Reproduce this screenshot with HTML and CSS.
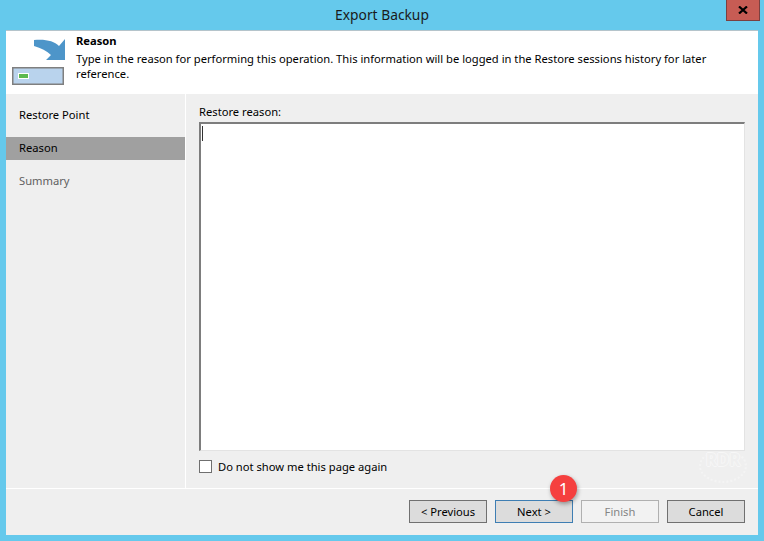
FILE: index.html
```html
<!DOCTYPE html>
<html lang="en">
<head>
<meta charset="utf-8">
<title>Export Backup</title>
<link rel="stylesheet" href="styles.css">
</head>
<body>
<div class="window">
  <div class="titlebar">
    <span class="title">Export Backup</span>
    <button class="close" aria-label="Close"><svg width="10" height="8" viewBox="0 0 10 8"><path d="M1 0.5 L9 7.5 M9 0.5 L1 7.5" stroke="#000" stroke-width="2.2" fill="none"/></svg></button>
  </div>
  <div class="panel">
    <header class="header">
      <svg class="logo" width="54" height="58" viewBox="0 0 54 58">
        <path d="M22 10 C34 9 42 11 47 16 L53 9 L53 30 L34 30 L39 25 C35 21 29 18 22 16 Z" fill="#4d95c9"/>
        <rect x="0.75" y="37.75" width="50.5" height="16.5" fill="#b9d3ed" stroke="#7f7f7f" stroke-width="1.5"/>
        <rect x="6.5" y="43.5" width="10" height="5" fill="#5cb94f" stroke="#fff" stroke-width="1"/>
      </svg>
      <div class="intro">
        <h1 class="heading">Reason</h1>
        <p class="desc">Type in the reason for performing this operation. This information will be logged in the Restore sessions history for later reference.</p>
      </div>
    </header>
    <div class="middle">
      <nav class="side">
        <div class="step">Restore Point</div>
        <div class="step current">Reason</div>
        <div class="step muted">Summary</div>
      </nav>
      <main class="content">
        <label class="field-label" for="reason">Restore reason:</label>
        <div class="textbox" id="reason"><span class="caret"></span></div>
        <div class="check-row"><span class="check"></span><span>Do not show me this page again</span></div>
        <div class="watermark"><span>RDR</span></div>
      </main>
    </div>
    <footer class="footer">
      <button class="btn">&lt; Previous</button>
      <div class="next-wrap">
        <button class="btn primary">Next &gt;</button>
        <span class="badge">1</span>
      </div>
      <button class="btn disabled">Finish</button>
      <button class="btn cancel">Cancel</button>
    </footer>
  </div>
</div>
</body>
</html>
```

FILE: styles.css
```css
* { box-sizing: border-box; }
html, body { margin: 0; padding: 0; }
body {
  width: 764px;
  height: 541px;
  overflow: hidden;
  font-family: "Noto Sans", "Open Sans", sans-serif;
  font-size: 11.2px;
  color: #000;
  background: #65c9ec;
}
.window {
  display: flex;
  flex-direction: column;
  height: 541px;
  padding: 0 6px 6px;
  background: #65c9ec;
}
.titlebar {
  position: relative;
  height: 30px;
  flex: none;
  text-align: center;
}
.title {
  display: block;
  padding-top: 5px;
  font-size: 13.8px;
  line-height: 20px;
  color: #1a1a1a;
}
.close {
  position: absolute;
  top: 0;
  right: -2px;
  width: 34px;
  height: 21px;
  padding: 0;
  display: flex;
  align-items: center;
  justify-content: center;
  background: #c75c54;
  border: 1px solid #7b4040;
  border-top: 0;
}
.panel {
  flex: 1;
  display: flex;
  flex-direction: column;
  background: #efefef;
  min-height: 0;
}
.header {
  height: 64px;
  flex: none;
  display: flex;
  background: #fff;
  border-top: 1px solid #b5c4cb;
}
.logo { margin-left: 6px; flex: none; margin-top: -1px; }
.intro { margin-left: 10px; width: 650px; padding-top: 1px; }
.heading {
  margin: 0;
  font-size: 11.2px;
  font-weight: 700;
  line-height: 17px;
}
.desc {
  margin: 2px 0 0;
  line-height: 15px;
}
.middle {
  flex: 1;
  display: flex;
  min-height: 0;
  border-bottom: 1px solid #fff;
}
.side {
  width: 180px;
  flex: none;
  padding-top: 10px;
  display: flex;
  flex-direction: column;
  gap: 10px;
  border-right: 1px solid #fff;
}
.step {
  height: 23px;
  line-height: 22px;
  padding-left: 13px;
  color: #000;
}
.step.current { background: #a0a0a0; }
.step.muted { color: #5f5f5f; }
.content {
  flex: 1;
  position: relative;
  padding: 10px 13px 0 13px;
  display: flex;
  flex-direction: column;
}
.field-label { line-height: 16px; height: 18px; color: #000; }
.textbox {
  height: 329px;
  flex: none;
  background: #fff;
  border: 1px solid #e3e3e3;
  border-top: 2px solid #7d7d7d;
  border-left: 2px solid #7d7d7d;
  padding: 2px 0 0 1px;
}
.caret { display: block; width: 1px; height: 15px; background: #333; }
.check-row {
  display: flex;
  align-items: flex-start;
  gap: 6px;
  margin-top: 9px;
  height: 16px;
  line-height: 14px;
  color: #000;
}
.check {
  width: 13px;
  height: 13px;
  flex: none;
  background: #fff;
  border: 1px solid #6f6f6f;
}
.watermark {
  position: absolute;
  right: 11px;
  top: 355px;
  width: 48px;
  height: 34px;
  border-radius: 50%;
  border: 2px dotted #f4f4f4;
  border-top-color: transparent;
  text-align: center;
  color: #efefef;
  font-size: 17px;
  line-height: 17px;
  font-weight: 700;
  text-shadow: 1px 0 #f7f7f7, -1px 0 #f7f7f7, 0 1px #f7f7f7, 0 -1px #f7f7f7;
}
.footer {
  height: 46px;
  flex: none;
  display: flex;
  justify-content: flex-end;
  gap: 8px;
  padding: 11px 13px 0 0;
}
.btn {
  width: 78px;
  height: 23px;
  padding: 0;
  font: inherit;
  line-height: 20px;
  color: #000;
  background: #dcdcdc;
  border: 1px solid #707070;
}
.btn.primary { border-color: #3e7eb3; }
.btn.disabled { color: #858585; background: #f2f2f2; border-color: #b0b0b0; }
.next-wrap { position: relative; width: 78px; height: 23px; }
.badge {
  position: absolute;
  left: 55px;
  top: -25px;
  width: 27px;
  height: 27px;
  border-radius: 50%;
  background: #f5403f;
  color: #fff;
  font-size: 17px;
  line-height: 27px;
  text-align: center;
  box-shadow: 1px 2px 4px rgba(0, 0, 0, 0.35);
}
```
